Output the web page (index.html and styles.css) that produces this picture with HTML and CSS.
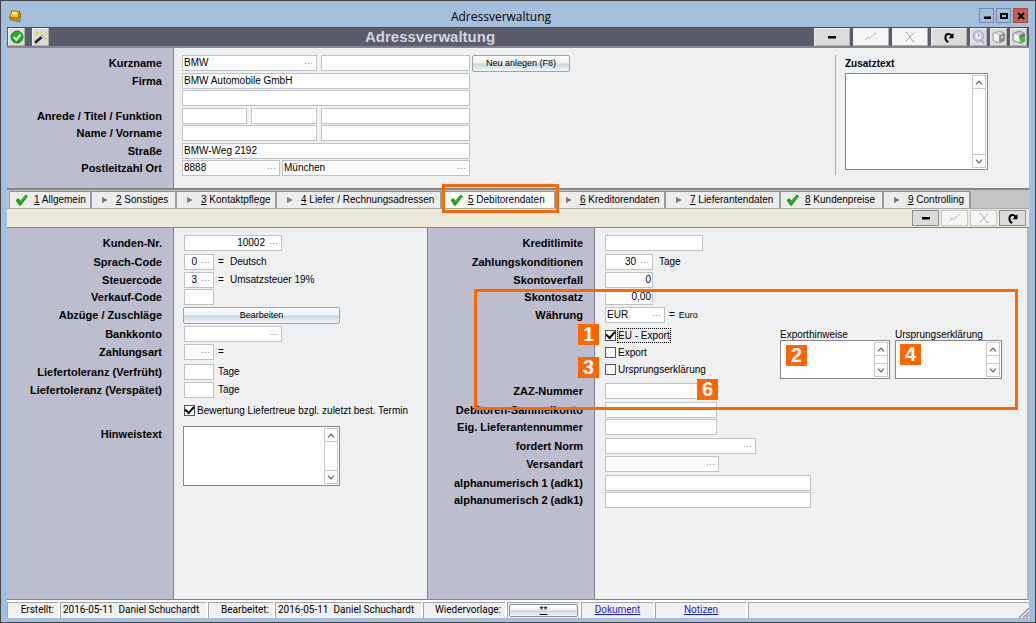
FILE: index.html
```html
<!DOCTYPE html>
<html lang="de">
<head>
<meta charset="utf-8">
<title>Adressverwaltung</title>
<link rel="stylesheet" href="styles.css">
</head>
<body>
<svg class="defs" aria-hidden="true">
  <symbol id="check" viewBox="0 0 13 12"><path d="M1 6.200 3.400 4.600 5.300 7 10.800.8 12.500 2.200 5.600 11.300 4.400 11.200z" fill="#25a01f" stroke="#14800f" stroke-width=".7"/><path d="M5.200 7.900 11 1.600" stroke="#6fd660" stroke-width=".8"/></symbol>
  <symbol id="arrow" viewBox="0 0 6 6"><path d="M0 0 6 3 0 6z" fill="#7d7d7d"/></symbol>
  <symbol id="up" viewBox="0 0 8 5"><path d="M1 4.300 4 1.200 7 4.300" fill="none" stroke="#606060" stroke-width="1.200"/></symbol>
  <symbol id="down" viewBox="0 0 8 5"><path d="M1 .7 4 3.800 7 .7" fill="none" stroke="#606060" stroke-width="1.200"/></symbol>
  <symbol id="minus" viewBox="0 0 12 12"><path d="M2 5h8v2.500H2z" fill="#000"/></symbol>
  <symbol id="ok" viewBox="0 0 12 12"><path d="M.5 8.500 3 6l1.500 1.500L10 2.500l1.500-.5" fill="none" stroke="#a0a0a0" stroke-dasharray="2 .4"/></symbol>
  <symbol id="cancel" viewBox="0 0 12 12"><path d="M1.500 1.500h1.500L9 10.500h1.500M10 1.500 6 6 1.500 10.500" fill="none" stroke="#a0a0a0" stroke-dasharray="2 .4"/></symbol>
  <symbol id="redo" viewBox="0 0 12 12"><path d="M5.200 11C1.200 9 1.600 3 5.600 3 7.300 3 8.300 4 8.800 5" fill="none" stroke="#000" stroke-width="2"/><path d="M10.500 2v5.200H5.600z" fill="#000"/></symbol>
</svg>

<div class="window">
  <header class="titlebar">
    <svg class="app-icon" viewBox="0 0 14 14"><path d="M4 1.500 11.500 2.500 10 9.500 1.500 8z" fill="#f6c72c" stroke="#a56a08"/><path d="M1.500 8 10 9.500 11.500 2.500 13 5 11.500 12.500 2.500 11z" fill="#d28e13" stroke="#8d5a0a" stroke-width=".7"/><path d="M4.500 3 9 3.500 8 6 4 5z" fill="#fff0a0"/><circle cx="11.500" cy="11.500" r="1.300" fill="#42b82c"/></svg>
    <span class="title">Adressverwaltung</span>
    <div class="window-buttons">
      <button aria-label="Minimieren"><svg viewBox="0 0 12 12"><path d="M3 6.500h7v2.500H3z"/></svg></button>
      <button aria-label="Maximieren"><svg viewBox="0 0 12 12"><path d="M2 3h8v6H2zM4 5v2h4V5z" fill-rule="evenodd"/></svg></button>
      <button class="close" aria-label="Schließen"><svg viewBox="0 0 12 12"><path d="M3 3l6 6M9 3 3 9" stroke="#000" stroke-width="2"/></svg></button>
    </div>
  </header>

  <div class="app">
    <div class="toolbar">
      <button class="tool square" aria-label="Übernehmen"><svg viewBox="0 0 14 14"><circle cx="7" cy="7" r="6" fill="#28a428" stroke="#15821a"/><path d="M3.500 7 6.200 9.800 10.600 4.500" fill="none" stroke="#fff" stroke-width="2"/></svg></button>
      <button class="tool square wand" aria-label="Assistent"><svg viewBox="0 0 14 14"><path d="M1 12.800 9.500 5.500" stroke="#222" stroke-width="2.600"/><path d="M7.500 7.200 10 5" stroke="#ddd" stroke-width="2"/><path d="M3 .5l.8 1.700 1.700.6-1.700.7L3 5.200l-.7-1.700L.8 2.800l1.500-.6zM7.500.5l.6 1.200 1.300.4-1.300.6-.6 1.300-.6-1.300-1.200-.6 1.200-.4zM12 1.500l.5 1.300 1.200.5-1.200.6-.5 1.200-.6-1.200-1.200-.6 1.200-.5zM12 7l.5 1 1 .5-1 .5-.5 1-.5-1-1-.5 1-.5z" fill="#f2c62b"/></svg></button>
      <h1>Adressverwaltung</h1>
      <div class="actions">
        <button class="tool" aria-label="Löschen"><svg><use href="#minus"/></svg></button>
        <button class="tool off" aria-label="Speichern" disabled><svg><use href="#ok"/></svg></button>
        <button class="tool off" aria-label="Abbrechen" disabled><svg><use href="#cancel"/></svg></button>
        <button class="tool" aria-label="Aktualisieren"><svg><use href="#redo"/></svg></button>
        <button class="tool square" aria-label="Suche"><svg viewBox="0 0 14 14"><path d="M8 9l4 4" stroke="#b0b0bc" stroke-width="2.500"/><circle cx="6.500" cy="6" r="5.300" fill="#c9c9f1" stroke="#9d9dc8"/><circle cx="6.500" cy="6" r="3.300" fill="#f4f4ff" stroke="#b9b9dc" stroke-width=".7"/><path d="M6.500 3.500V6h2" fill="none" stroke="#7777aa" stroke-width=".8"/></svg></button>
        <button class="tool square" aria-label="Drucken"><svg viewBox="0 0 14 14"><path d="M1 3.500 7 1l5.500 2v7.500l-5 2.500L1 10.500z" fill="#d6d6d6" stroke="#a0a0a0"/><path d="M7 5.500 12.500 3v7.500L7.500 13z" fill="#8d8d8d"/><path d="M2 4 7 5.500v6.500L2 10z" fill="#f4f4f4"/><path d="M9 6.500l2-1v2l-2 1z" fill="#ddd"/></svg></button>
        <button class="tool square" aria-label="Druckvorschau"><svg viewBox="0 0 14 14"><path d="M1 3.500 7 1l5.500 2v7.500l-5 2.500L1 10.500z" fill="#c4c4c4" stroke="#909090"/><path d="M2 4 7 5.500v6.500L2 10z" fill="#f4f4f4"/><path d="M7 5.500 12.500 3v4L8 10z" fill="#777"/><path d="M8 8.500 13 6v5.500L9 14z" fill="#48b83a"/></svg></button>
      </div>
    </div>

    <section class="master">
      <div class="labels rows top-rows">
        <label for="kurz">Kurzname</label>
        <label for="firma">Firma</label>
        <span></span>
        <label for="anrede">Anrede / Titel / Funktion</label>
        <label for="name">Name / Vorname</label>
        <label for="strasse">Straße</label>
        <label for="plz">Postleitzahl Ort</label>
      </div>
      <div class="fields rows top-rows master-fields">
        <div class="row"><span class="field lookup w135"><input id="kurz" value="BMW"><button aria-label="Kurzname suchen">···</button></span><input class="field w149" aria-label="Kurzname 2"><button class="push new">Neu anlegen (F8)</button></div>
        <div class="row"><input id="firma" class="field w288" value="BMW Automobile GmbH"></div>
        <div class="row"><input class="field w288" aria-label="Firma Zusatz"></div>
        <div class="row"><input id="anrede" class="field w65"><input class="field w66" aria-label="Titel"><input class="field w149" aria-label="Funktion"></div>
        <div class="row"><input id="name" class="field w135"><input class="field w149" aria-label="Vorname"></div>
        <div class="row"><input id="strasse" class="field w288" value="BMW-Weg 2192"></div>
        <div class="row place"><span class="field lookup w98"><input id="plz" value="8888"><button aria-label="Postleitzahl suchen">···</button></span><span class="field lookup w188"><input aria-label="Ort" value="München"><button aria-label="Ort suchen">···</button></span></div>
      </div>
      <div class="extra">
        <label for="zusatz">Zusatztext</label>
        <div class="memo memo-extra"><textarea id="zusatz"></textarea><div class="scroll"><button aria-label="Nach oben"><svg><use href="#up"/></svg></button><button aria-label="Nach unten"><svg><use href="#down"/></svg></button></div></div>
      </div>
    </section>

    <nav class="tabs">
      <button><svg class="done"><use href="#check"/></svg><span><u>1</u> Allgemein</span></button>
      <button><svg class="open"><use href="#arrow"/></svg><span><u>2</u> Sonstiges</span></button>
      <button><svg class="open"><use href="#arrow"/></svg><span><u>3</u> Kontaktpflege</span></button>
      <button><svg class="open"><use href="#arrow"/></svg><span><u>4</u> Liefer / Rechnungsadressen</span></button>
      <button class="active"><svg class="done"><use href="#check"/></svg><span><u>5</u> Debitorendaten</span></button>
      <button><svg class="open"><use href="#arrow"/></svg><span><u>6</u> Kreditorendaten</span></button>
      <button><svg class="open"><use href="#arrow"/></svg><span><u>7</u> Lieferantendaten</span></button>
      <button><svg class="done"><use href="#check"/></svg><span><u>8</u> Kundenpreise</span></button>
      <button><svg class="open"><use href="#arrow"/></svg><span><u>9</u> Controlling</span></button>
    </nav>

    <div class="subbar">
      <button class="tool" aria-label="Löschen"><svg><use href="#minus"/></svg></button>
      <button class="tool off" aria-label="Speichern" disabled><svg><use href="#ok"/></svg></button>
      <button class="tool off" aria-label="Abbrechen" disabled><svg><use href="#cancel"/></svg></button>
      <button class="tool" aria-label="Aktualisieren"><svg><use href="#redo"/></svg></button>
    </div>

    <main class="detail">
      <div class="labels rows left-rows">
        <label for="kdnr">Kunden-Nr.</label>
        <label for="sprache">Sprach-Code</label>
        <label for="steuer">Steuercode</label>
        <label for="verkauf">Verkauf-Code</label>
        <label for="abzuege">Abzüge / Zuschläge</label>
        <label for="bank">Bankkonto</label>
        <label for="zahlart">Zahlungsart</label>
        <label for="frueh">Liefertoleranz (Verfrüht)</label>
        <label for="spaet">Liefertoleranz (Verspätet)</label>
        <span></span>
        <label for="hinweis">Hinweistext</label>
      </div>
      <div class="fields rows left-rows customer-fields">
        <div class="row"><span class="field lookup num w98"><input id="kdnr" value="10002"><button aria-label="Kunde suchen">···</button></span></div>
        <div class="row"><span class="field lookup num w30"><input id="sprache" value="0"><button aria-label="Sprache suchen">···</button></span><span class="eq">=</span><span>Deutsch</span></div>
        <div class="row"><span class="field lookup num w30"><input id="steuer" value="3"><button aria-label="Steuercode suchen">···</button></span><span class="eq">=</span><span>Umsatzsteuer 19%</span></div>
        <div class="row"><input id="verkauf" class="field w30"></div>
        <div class="row"><button id="abzuege" class="push edit">Bearbeiten</button></div>
        <div class="row"><span class="field lookup w98"><input id="bank"><button aria-label="Bankkonto suchen">···</button></span></div>
        <div class="row"><span class="field lookup w30"><input id="zahlart"><button aria-label="Zahlungsart suchen">···</button></span><span class="eq">=</span></div>
        <div class="row"><input id="frueh" class="field w30"><span>Tage</span></div>
        <div class="row"><input id="spaet" class="field w30"><span>Tage</span></div>
        <label class="row tick"><input type="checkbox" checked><span>Bewertung Liefertreue bzgl. zuletzt best. Termin</span></label>
        <div class="memo memo-note"><textarea id="hinweis"></textarea><div class="scroll"><button aria-label="Nach oben"><svg><use href="#up"/></svg></button><button aria-label="Nach unten"><svg><use href="#down"/></svg></button></div></div>
      </div>

      <section class="debtor">
        <div class="labels rows right-rows">
          <label for="limit">Kreditlimite</label>
          <label for="kond">Zahlungskonditionen</label>
          <label for="verfall">Skontoverfall</label>
          <label for="satz">Skontosatz</label>
          <label for="waehrung">Währung</label>
          <span></span><span></span><span></span>
          <label for="zaz">ZAZ-Nummer</label>
          <label for="sammel">Debitoren-Sammelkonto</label>
          <label for="eig">Eig. Lieferantennummer</label>
          <label for="norm">fordert Norm</label>
          <label for="versand">Versandart</label>
          <label for="alpha1">alphanumerisch 1 (adk1)</label>
          <label for="alpha2">alphanumerisch 2 (adk1)</label>
        </div>
        <div class="fields rows right-rows debtor-fields">
          <div class="row"><input id="limit" class="field w98"></div>
          <div class="row"><span class="field lookup num w48"><input id="kond" value="30"><button aria-label="Kondition suchen">···</button></span><span>Tage</span></div>
          <div class="row"><input id="verfall" class="field num w48" value="0"></div>
          <div class="row"><input id="satz" class="field num w48" value="0,00"></div>
          <div class="row currency"><span class="field lookup w60"><input id="waehrung" value="EUR"><button aria-label="Währung suchen">···</button></span><span>=</span><small>Euro</small></div>
          <label class="row tick focus"><input type="checkbox" checked><span>EU - Export</span></label>
          <label class="row tick"><input type="checkbox"><span>Export</span></label>
          <label class="row tick"><input type="checkbox"><span>Ursprungserklärung</span></label>
          <div class="row"><input id="zaz" class="field w112"></div>
          <div class="row"><input id="sammel" class="field w112"></div>
          <div class="row"><input id="eig" class="field w112"></div>
          <div class="row"><span class="field lookup w151"><input id="norm"><button aria-label="Norm suchen">···</button></span></div>
          <div class="row"><span class="field lookup w114"><input id="versand"><button aria-label="Versandart suchen">···</button></span></div>
          <div class="row"><input id="alpha1" class="field w206"></div>
          <div class="row"><input id="alpha2" class="field w206"></div>
          <div class="export-notes">
            <div class="note"><label for="exphin">Exporthinweise</label><div class="memo memo-small"><textarea id="exphin"></textarea><div class="scroll"><button aria-label="Nach oben"><svg><use href="#up"/></svg></button><button aria-label="Nach unten"><svg><use href="#down"/></svg></button></div></div></div>
            <div class="note"><label for="urspr">Ursprungserklärung</label><div class="memo memo-small"><textarea id="urspr"></textarea><div class="scroll"><button aria-label="Nach oben"><svg><use href="#up"/></svg></button><button aria-label="Nach unten"><svg><use href="#down"/></svg></button></div></div></div>
          </div>
        </div>
        <div class="callout"></div>
        <b class="badge b1">1</b>
        <b class="badge b2">2</b>
        <b class="badge b3">3</b>
        <b class="badge b4">4</b>
        <b class="badge b6">6</b>
      </section>
    </main>

    <footer class="status">
      <span class="cap">Erstellt:</span>
      <span class="val">2016-05-11&nbsp; Daniel Schuchardt</span>
      <span class="cap">Bearbeitet:</span>
      <span class="val">2016-05-11&nbsp; Daniel Schuchardt</span>
      <span class="cap">Wiedervorlage:</span>
      <span class="slot"><button class="push" aria-label="Wiedervorlage"><u>**</u></button></span>
      <span class="link"><a href="#dokument">Dokument</a></span>
      <span class="link"><a href="#notizen">Notizen</a></span>
      <span class="rest"><svg viewBox="0 0 10 10"><path d="M0 10 10 0M4 10l6-6M7 10l3-3" stroke="#888" stroke-width="1.200"/></svg></span>
    </footer>
  </div>
</div>
</body>
</html>
```
FILE: styles.css
```css
:root {
  --frame: #a5bedb;
  --label: #bcbdce;
  --panel: #eff0f2;
  --line: #808286;
  --field-line: #bfc3c8;
  --mark: #ff6600;
}
* { box-sizing: border-box; }
body {
  margin: 0;
  font: 10px/16px "Liberation Sans", Arial, sans-serif;
  color: #000;
}
button, input, textarea {
  font: inherit;
  color: inherit;
  margin: 0;
  padding: 0;
  border: 0;
  border-radius: 0;
  background: none;
}
.defs { position: absolute; width: 0; height: 0; }

.window {
  min-height: 100vh;
  display: flex;
  flex-direction: column;
  background: var(--frame);
  border: 1px solid #41444c;
  padding: 0 6px 4px;
}
.titlebar {
  height: 26px;
  display: grid;
  grid-template-columns: 1fr auto 1fr;
  align-items: center;
  padding: 3px 1px 0;
}
.app-icon { width: 14px; height: 14px; }
.title { font: 12px/16px "Open Sans", "Noto Sans", sans-serif; padding: 2px 34px 0 0; }
.window-buttons { display: flex; gap: 2px; justify-content: flex-end; }
.window-buttons button { width: 15px; height: 15px; border: 1px solid #7488ab; display: grid; place-items: center; }
.window-buttons .close { background: #cb5f4b; border-color: #a34c42; }
.window-buttons svg { width: 12px; height: 12px; }

.app {
  flex: 1;
  display: flex;
  flex-direction: column;
  background: var(--panel);
}
.toolbar {
  display: grid;
  grid-template-columns: auto auto 1fr auto;
  align-items: center;
  height: 21px;
  padding: 0 2px 0 1px;
  background: #5a5c6d;
  border-top: 1px solid #4a4c5c;
  border-bottom: 2px solid #85868c;
}
.toolbar h1 {
  margin: 0;
  font-size: 15px;
  line-height: 18px;
  color: #d2d4df;
  padding-left: 316px;
}
.actions { display: flex; gap: 3px; }
.tool {
  width: 36px;
  height: 18px;
  background: #dcdcdc;
  border: 1px solid #efefef;
  border-right-color: #b0b0b0;
  border-bottom-color: #b0b0b0;
  display: grid;
  place-items: center;
}
.tool svg { width: 12px; height: 12px; }
.tool.off { background: #f6f6f6; }
.tool.square { width: 17px; }
.tool.square svg { width: 14px; height: 14px; }
.wand { margin-left: 7px; }

.labels {
  width: 167px;
  flex: none;
  background: var(--label);
  border-right: 1px solid var(--line);
  padding-right: 11px;
  font-weight: bold;
  font-size: 11px;
  text-align: right;
  white-space: nowrap;
}
.rows { display: grid; align-content: start; padding-top: 7px; }
.top-rows { grid-template-rows: 18px 17px 18px 17px 18px 17px 17px; }
.left-rows { grid-template-rows: 19px 18px 17px 18px 19px 18px 20px 18px 20px 24px auto; }
.right-rows { grid-template-rows: 19px 18px 17px 18px 20px 17px 17px 22px 19px 17px 19px 18px 19px 17px 16px; }
.row { display: flex; align-items: center; gap: 4px; height: 16px; white-space: nowrap; }

.field {
  height: 16px;
  background: #fff;
  border: 1px solid var(--field-line);
  padding: 0 1px;
  flex: none;
}
.lookup { display: flex; align-items: center; }
.lookup input { flex: 1; min-width: 0; width: 0; height: 14px; }
.lookup button { color: #808080; line-height: 10px; padding: 0 2px; font-size: 9px; }
.num, .num input { text-align: right; }
.num button { margin-left: 2px; }
.w30 { width: 30px; }
.w48 { width: 48px; }
.w60 { width: 60px; }
.w65 { width: 65px; }
.w66 { width: 66px; }
.w98 { width: 98px; }
.w112 { width: 112px; }
.w114 { width: 114px; }
.w135 { width: 135px; }
.w149 { width: 149px; }
.w151 { width: 151px; }
.w188 { width: 188px; }
.w206 { width: 206px; }
.w288 { width: 288px; }
.eq { width: 8px; }

.push {
  height: 17px;
  border: 1px solid #9aa4ae;
  border-radius: 2px;
  background: linear-gradient(#fff 0%, #eef1f4 45%, #ccd6df 55%, #f4f7fa 100%);
  font-size: 9px;
  line-height: 15px;
}
.new { width: 98px; margin-left: -2px; }
.edit { width: 157px; margin-left: -1px; }

.memo {
  display: flex;
  background: #fff;
  border: 1px solid #85878a;
  padding: 1px;
}
.memo textarea { flex: 1; min-width: 0; height: 100%; resize: none; outline: 0; overflow: hidden; }
.scroll {
  width: 14px;
  display: flex;
  flex-direction: column;
  justify-content: space-between;
  border: 1px solid #c8c8c8;
}
.scroll button { height: 13px; display: grid; place-items: center; }
.scroll button:first-child { border-bottom: 1px solid #c8c8c8; }
.scroll button:last-child { border-top: 1px solid #c8c8c8; }
.scroll svg { width: 8px; height: 5px; }
.memo-extra { width: 143px; height: 97px; }
.memo-note { width: 157px; height: 60px; margin-left: -1px; }
.memo-small { height: 39px; }

.master {
  display: flex;
  height: 142px;
  border-bottom: 2px solid #85868c;
}
.master-fields { padding-left: 8px; }
.extra {
  margin: 7px 41px 13px auto;
  padding: 1px 0 0 9px;
  border-left: 1px solid #a8aab0;
}
.place { gap: 2px; }
.extra label { display: block; font-weight: bold; height: 17px; }

.tabs {
  display: grid;
  grid-template-columns: 83px 85px 100px 165px 114px 110px 115px 103px 87px;
  height: 18px;
  padding: 1px 2px 0;
  background: #c5c5c5;
}
.tabs button {
  position: relative;
  display: grid;
  grid-template-columns: 24px auto;
  justify-content: start;
  align-items: center;
  background: #ededee;
  border-top: 1px solid #8f9196;
  border-right: 2px solid #999ba1;
  line-height: 16px;
  white-space: nowrap;
}
.tabs button:first-child { border-left: 1px solid #999ba1; }
.tabs .done { width: 13px; height: 12px; margin-left: 5px; }
.tabs .open { width: 6px; height: 6px; margin-left: 10px; }
.tabs .active { background: #fff; grid-template-columns: 26px auto; }
.tabs .active .done { margin-left: 8px; }
.tabs .active::after {
  content: "";
  position: absolute;
  z-index: 1;
  inset: -8px -5px -5px 0;
  border: 3px solid var(--mark);
}

.subbar {
  display: flex;
  justify-content: flex-end;
  align-items: center;
  gap: 2px;
  height: 20px;
  padding-right: 3px;
  background: #ece9d8;
  border-top: 1px solid #a9aaa6;
  border-bottom: 1px solid var(--line);
}
.subbar .tool { width: 27px; height: 16px; border: 1px solid #8e8e8e; }
.subbar .off { border-color: #c9c9c3; }

.detail { flex: 1; display: flex; border-right: 2px solid #b5b5b8; border-bottom: 1px solid var(--line); }
.customer-fields { width: 253px; flex: none; padding-left: 10px; }
.debtor {
  flex: 1;
  display: flex;
  position: relative;
  border-left: 1px solid var(--line);
}
.debtor-fields {
  flex: 1;
  grid-template-columns: 175px 1fr;
  padding-left: 10px;
}
.debtor-fields .row { grid-column: 1; }
.debtor-fields .row > .field + span { padding-left: 2px; }
.debtor-fields .currency > .field + span { padding-left: 0; }
small { font-size: 9px; }
.tick { gap: 2px; }
.tick input {
  appearance: none;
  width: 11px;
  height: 11px;
  border: 1px solid #55585c;
  background: #fff;
  display: grid;
  place-items: center;
  flex: none;
}
.tick input:checked::after {
  content: "";
  width: 7px;
  height: 4px;
  border: solid #000;
  border-width: 0 0 2px 2px;
  transform: translateY(-1px) rotate(-48deg);
}
.tick span { line-height: 13px; }
.focus span { outline: 1px dotted #000; }
.export-notes {
  grid-column: 2;
  grid-row: 6 / 10;
  display: flex;
  gap: 5px;
}
.note { width: 110px; }
.note + .note { width: 107px; }
.note label { display: block; height: 13px; }

.callout {
  position: absolute;
  left: 46px;
  right: 9px;
  top: 61px;
  height: 121px;
  border: 3px solid var(--mark);
}
.badge {
  position: absolute;
  width: 21px;
  height: 21px;
  background: var(--mark);
  color: #fff;
  font-size: 20px;
  line-height: 21px;
  text-align: center;
}
.b1 { left: 150px; top: 96px; }
.b3 { left: 150px; top: 129px; }
.b2 { left: 358px; top: 117px; }
.b4 { left: 472px; top: 116px; }
.b6 { left: 269px; top: 151px; }

.status {
  display: grid;
  grid-template-columns: 51px 146px 65px 146px 82px 72px 72px 91px 1fr;
  gap: 2px;
  padding-top: 2px;
  background: #fff;
  font: 10px/14px Roboto, "Liberation Sans", sans-serif;
  white-space: nowrap;
}
.status > span {
  height: 16px;
  background: #f0f0f0;
  border: solid #a7a7a7;
  border-width: 1px 0 0 1px;
}
.cap { text-align: right; padding-right: 4px; }
.val { padding-left: 2px; }
.status .slot { display: grid; padding: 1px; }
.slot .push { height: 13px; line-height: 11px; border-color: #8b9096; }
.link { text-align: center; }
.link a { color: #1a1aff; }
.status .rest { display: flex; justify-content: flex-end; align-items: flex-end; }
.rest svg { width: 10px; height: 10px; }
```
